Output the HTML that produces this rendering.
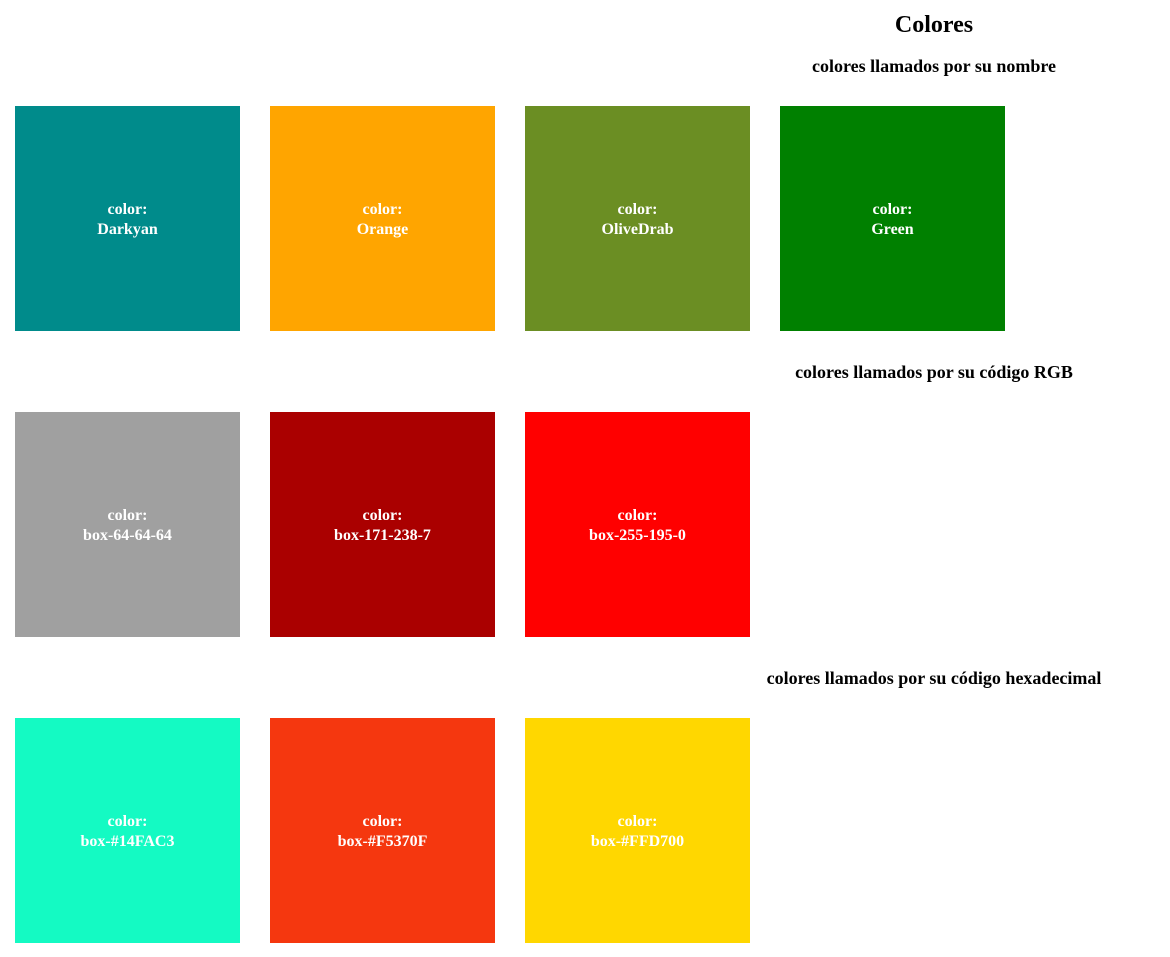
<!DOCTYPE html>
<html><head><meta charset="utf-8"><style>
body{margin:0;width:1170px;height:957px;background:#fff;font-family:"Liberation Serif",serif;position:relative;overflow:hidden}
.h{position:absolute;left:700px;width:468px;text-align:center;font-weight:bold;color:#000;margin:0}
.s{font-size:18px;line-height:22px}
.b{position:absolute;width:225px;height:225px;display:flex;align-items:center;justify-content:center;text-align:center;color:#fff;font-weight:bold;font-size:16px;line-height:20px;padding-top:2px;box-sizing:border-box}
</style></head><body>
<div class="h" style="top:10px;font-size:24px;line-height:30px">Colores</div>
<div class="h s" style="top:55px">colores llamados por su nombre</div>
<div class="h s" style="top:361px">colores llamados por su código RGB</div>
<div class="h s" style="top:667px">colores llamados por su código hexadecimal</div>

<div class="b" style="left:15px;top:106px;background:#008B8B">color:<br>Darkyan</div>
<div class="b" style="left:270px;top:106px;background:#FFA500">color:<br>Orange</div>
<div class="b" style="left:525px;top:106px;background:#6B8E23">color:<br>OliveDrab</div>
<div class="b" style="left:780px;top:106px;background:#008000">color:<br>Green</div>

<div class="b" style="left:15px;top:412px;background:#A0A0A0">color:<br>box-64-64-64</div>
<div class="b" style="left:270px;top:412px;background:#AA0000">color:<br>box-171-238-7</div>
<div class="b" style="left:525px;top:412px;background:#FF0000">color:<br>box-255-195-0</div>

<div class="b" style="left:15px;top:718px;background:#14FAC3">color:<br>box-#14FAC3</div>
<div class="b" style="left:270px;top:718px;background:#F5370F">color:<br>box-#F5370F</div>
<div class="b" style="left:525px;top:718px;background:#FFD700">color:<br>box-#FFD700</div>
</body></html>
